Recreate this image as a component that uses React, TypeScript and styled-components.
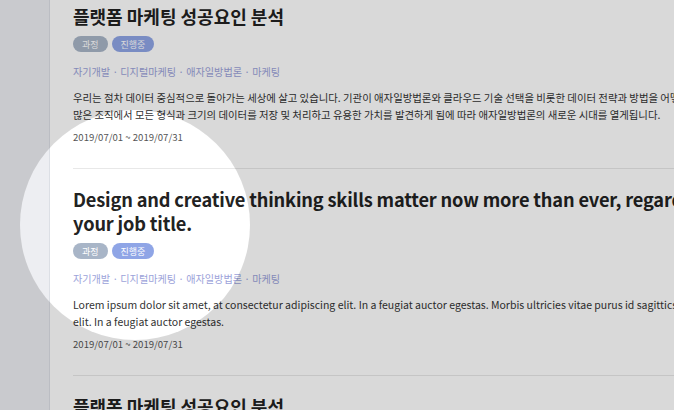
import React from "react";
import styled, { createGlobalStyle } from "styled-components";

const Global = createGlobalStyle`
  html, body { margin: 0; padding: 0; }
  body {
    width: 674px;
    height: 410px;
    overflow: hidden;
    background: #ffffff;
    font-family: "Noto Sans CJK KR", "Noto Sans", sans-serif;
    -webkit-font-smoothing: antialiased;
  }
`;

const Page = styled.div`
  position: relative;
  display: flex;
  width: 674px;
  height: 410px;
  overflow: hidden;
`;

const Sidebar = styled.aside`
  flex: 0 0 49px;
  background: #edeef2;
  border-right: 1px solid #dcdfe5;
`;

const Main = styled.main`
  flex: 0 0 auto;
  width: 1000px;
  padding-left: 23px;
  background: #ffffff;
`;

const List = styled.div`
  margin-top: -14px;
  display: flex;
  flex-direction: column;
`;

const Item = styled.article`
  padding: 18px 0 23px;
  border-bottom: 1px solid #e8e8e8;
  display: flex;
  flex-direction: column;
  align-items: flex-start;
`;

const Title = styled.h2<{ $latin?: boolean }>`
  margin: 0;
  font-size: ${(p) => (p.$latin ? "18.2px" : "18px")};
  line-height: 24px;
  font-weight: 700;
  color: #222222;
  white-space: nowrap;
  letter-spacing: ${(p) => (p.$latin ? "-0.15px" : "0")};
`;

const Tags = styled.div`
  margin-top: 8px;
  display: flex;
  gap: 4px;
`;

const Tag = styled.span<{ $tone: "gray" | "blue" }>`
  display: inline-flex;
  align-items: center;
  justify-content: center;
  height: 16px;
  padding: 0 9px;
  border-radius: 8px;
  font-size: 9px;
  color: #ffffff;
  background: ${(p) => (p.$tone === "gray" ? "#a8b5c7" : "#8fa5e6")};
`;

const Cats = styled.div`
  margin-top: 12px;
  font-size: 10.1px;
  line-height: 16px;
  color: #9ca3da;
  white-space: nowrap;
`;

const Body = styled.p<{ $latin?: boolean }>`
  margin: 9px 0 0;
  font-size: ${(p) => (p.$latin ? "10.5px" : "10.4px")};
  line-height: 17px;
  color: #333333;
  white-space: nowrap;
`;

const Date = styled.div`
  margin-top: 6px;
  font-size: 9.6px;
  line-height: 16px;
  color: #555555;
`;

const Spotlight = styled.div`
  position: absolute;
  left: 20px;
  top: 110px;
  width: 230px;
  height: 230px;
  border-radius: 50%;
  box-shadow: 0 0 0 2000px rgba(0, 0, 0, 0.15);
  pointer-events: none;
`;

const cats = "자기개발 · 디지털마케팅 · 애자일방법론 · 마케팅";
const date = "2019/07/01 ~ 2019/07/31";

function Meta() {
  return (
    <>
      <Tags>
        <Tag $tone="gray">과정</Tag>
        <Tag $tone="blue">진행중</Tag>
      </Tags>
      <Cats>{cats}</Cats>
    </>
  );
}

export default function App() {
  return (
    <>
      <Global />
      <Page>
        <Sidebar />
        <Main>
          <List>
            <Item>
              <Title>플랫폼 마케팅 성공요인 분석</Title>
              <Meta />
              <Body>
                우리는 점차 데이터 중심적으로 돌아가는 세상에 살고 있습니다. 기관이 애자일방법론와 클라우드 기술 선택을 비롯한 데이터 전략과 방법을 어떻게 구현하는지 결정하면서
                <br />
                많은 조직에서 모든 형식과 크기의 데이터를 저장 및 처리하고 유용한 가치를 발견하게 됨에 따라 애자일방법론의 새로운 시대를 열게됩니다.
              </Body>
              <Date>{date}</Date>
            </Item>
            <Item>
              <Title $latin>
                Design and creative thinking skills matter now more than ever, regardless of
                <br />
                your job title.
              </Title>
              <Meta />
              <Body $latin>
                Lorem ipsum dolor sit amet, at consectetur adipiscing elit. In a feugiat auctor egestas. Morbis ultricies vitae purus id sagittics. Lorem ipsum dolor sit amet, consectetur adipiscing
                <br />
                elit. In a feugiat auctor egestas.
              </Body>
              <Date>{date}</Date>
            </Item>
            <Item>
              <Title>플랫폼 마케팅 성공요인 분석</Title>
              <Meta />
            </Item>
          </List>
        </Main>
        <Spotlight />
      </Page>
    </>
  );
}
